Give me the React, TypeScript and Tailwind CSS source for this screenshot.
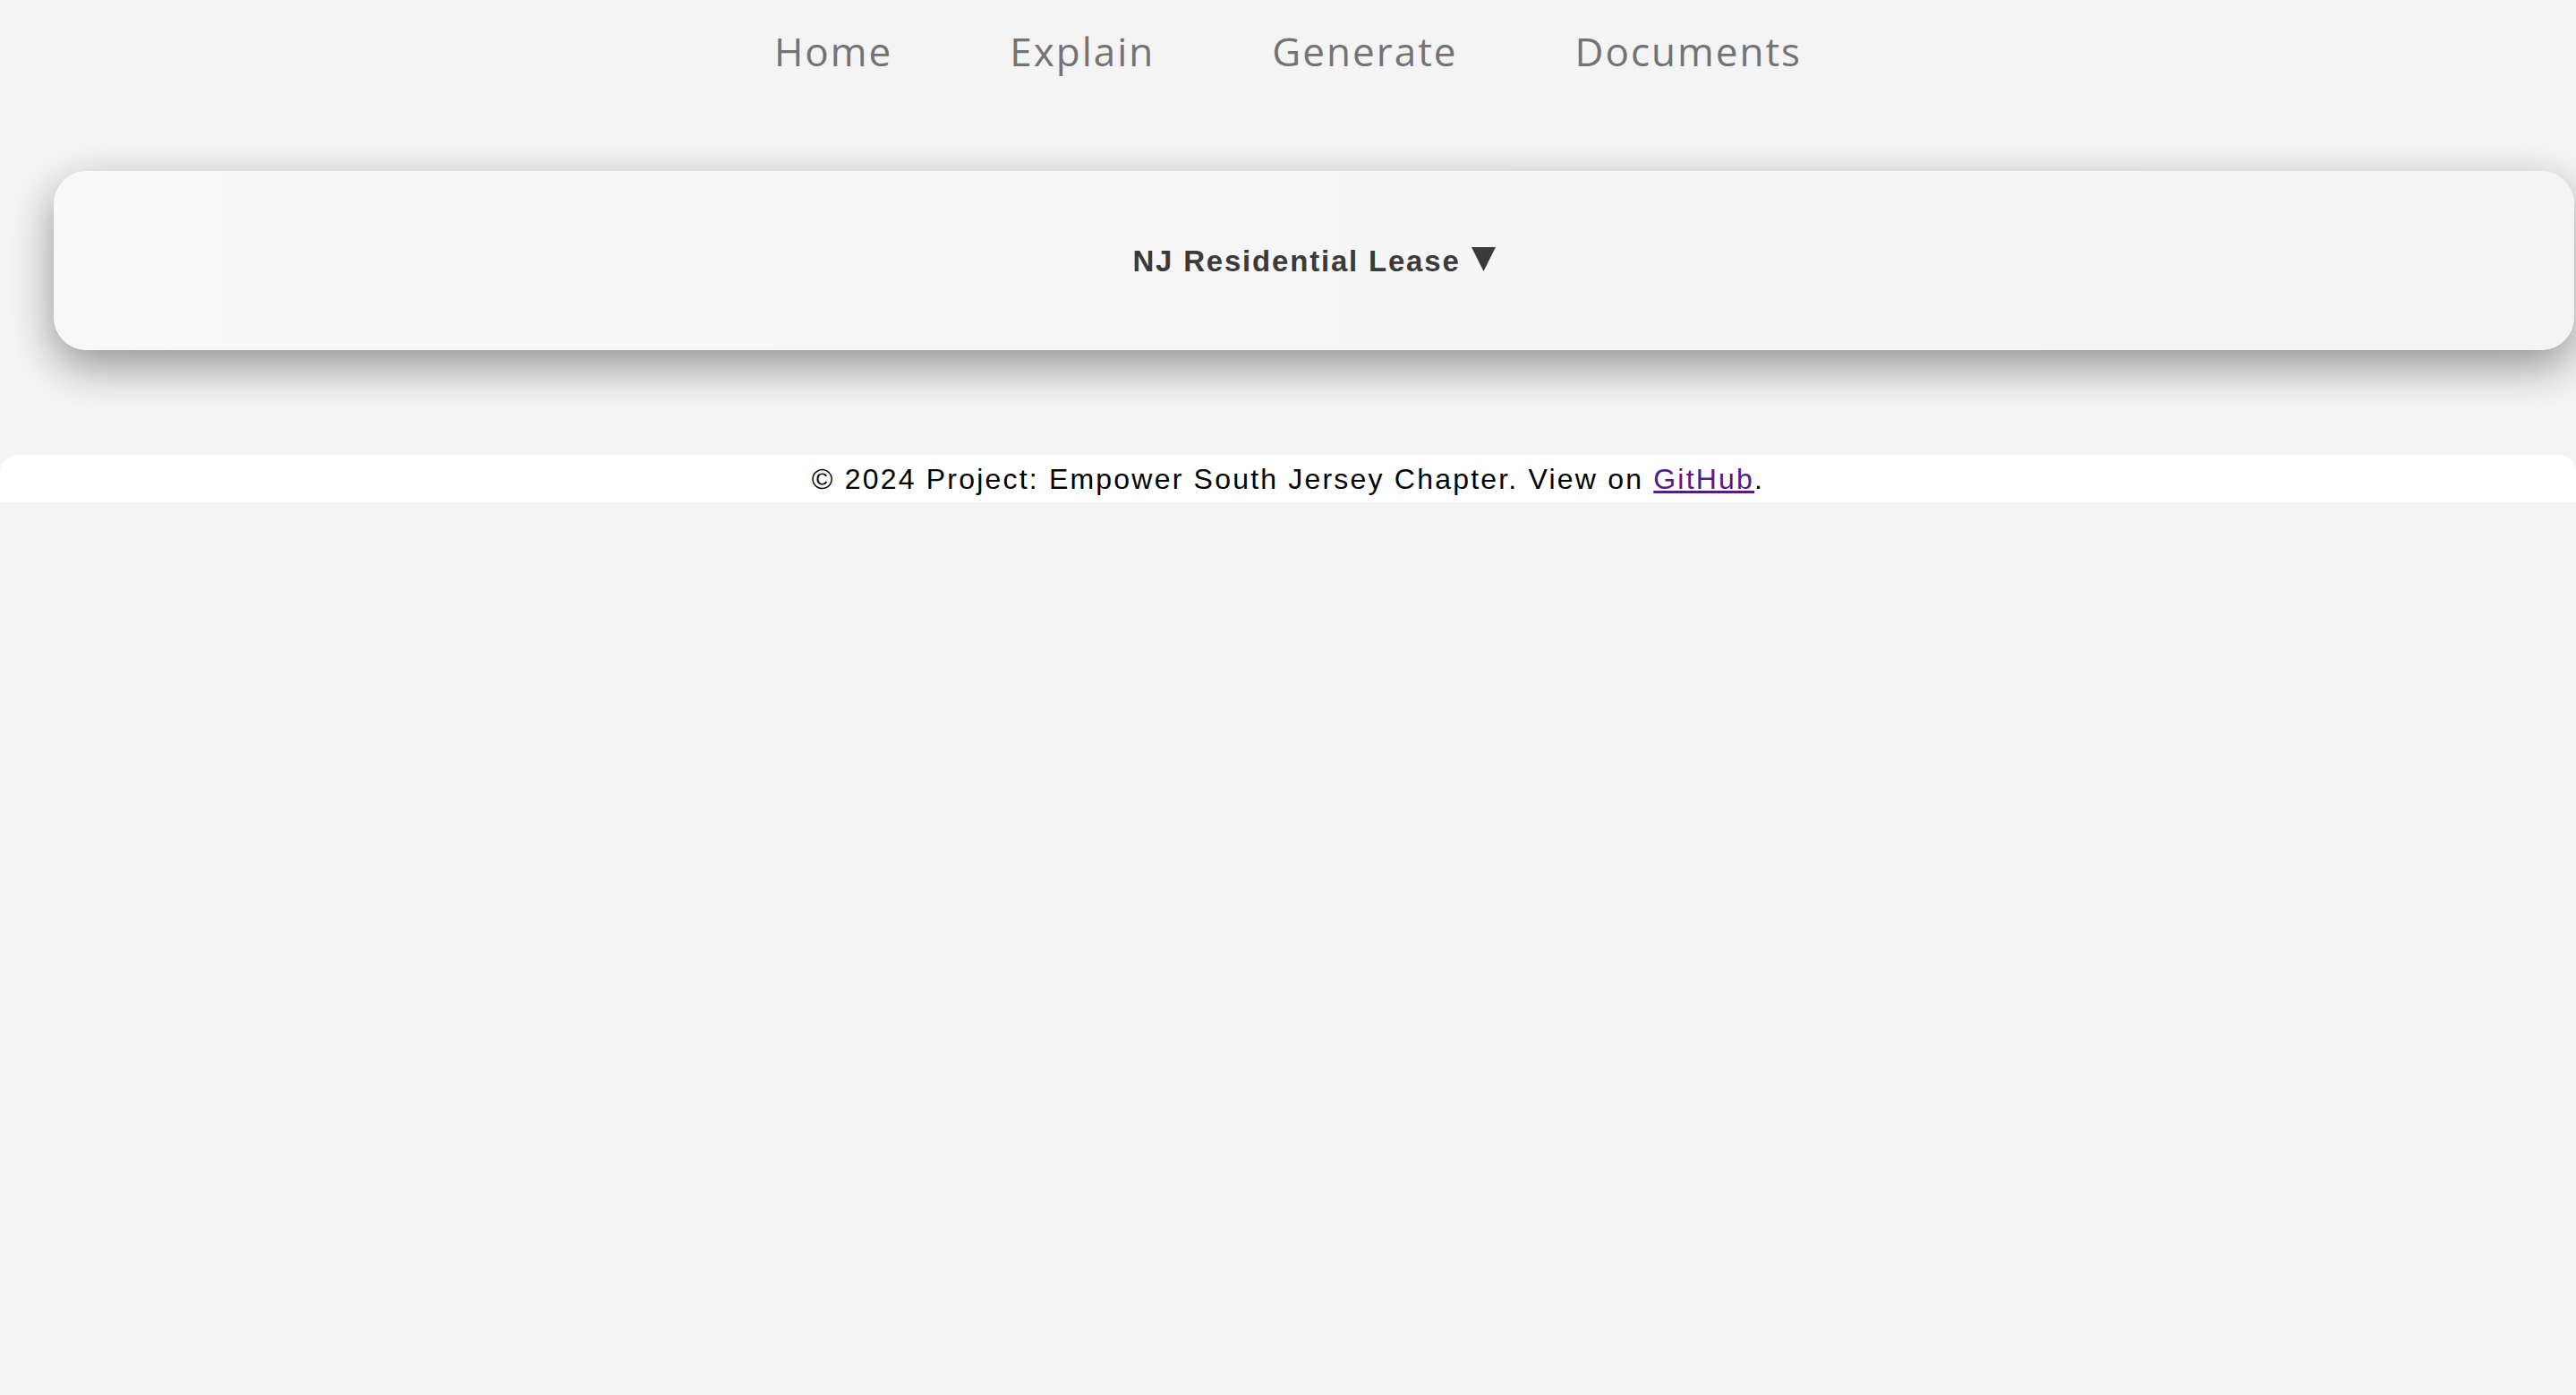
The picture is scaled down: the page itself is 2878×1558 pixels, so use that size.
import React from 'react';

const links = ['Home', 'Explain', 'Generate', 'Documents'];

const App: React.FC = () => {
  return (
    <div className="min-h-screen w-full bg-[#f4f4f4] overflow-hidden">
      {/* top nav */}
      <nav className="flex justify-center gap-[131px] pt-[35px]">
        {links.map((l) => (
          <a
            key={l}
            href="#"
            className="text-[44px] leading-none tracking-[2px] text-[#737373] font-['Open_Sans',sans-serif]"
          >
            {l}
          </a>
        ))}
      </nav>

      {/* document card */}
      <main className="mt-[112px] ml-[60px] mr-[2px]">
        <div className="h-[200px] rounded-[37px] bg-gradient-to-r from-[#f8f8f8] to-[#f4f4f4] shadow-[0_18px_50px_rgba(0,0,0,0.4)] flex items-center justify-center">
          <div className="flex items-center gap-[12px] text-[#3a3a3a] font-['Liberation_Sans',Arial,sans-serif]">
            <span className="text-[33px] font-bold tracking-[1.8px] leading-none">NJ Residential Lease</span>
            <svg width="27" height="27" viewBox="0 0 27 27" className="-mt-[4px]">
              <polygon points="0,0 27,0 13.5,27" fill="#3a3a3a" />
            </svg>
          </div>
        </div>
      </main>

      <footer className="mt-[117px] h-[53px] bg-white rounded-t-[20px] flex items-center justify-center">
        <p className="text-[32px] tracking-[2.2px] text-black font-['Liberation_Sans',Arial,sans-serif]">
          © 2024 Project: Empower South Jersey Chapter. View on{' '}
          <a href="#" className="text-[#551a8b] underline">GitHub</a>.
        </p>
      </footer>
    </div>
  );
};

export default App;
